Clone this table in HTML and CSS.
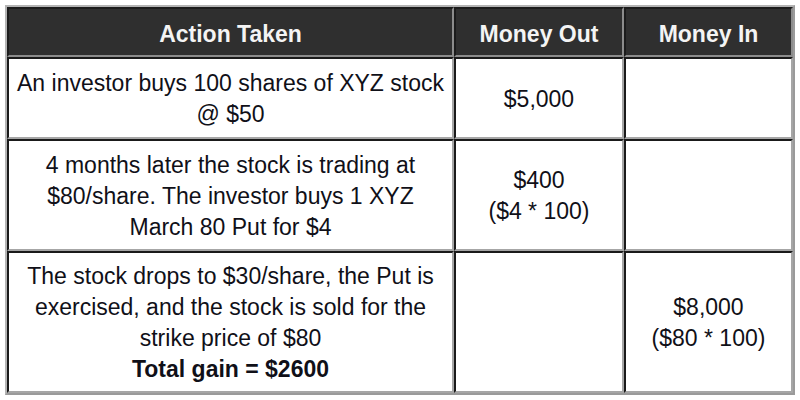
FILE: index.html
```html
<!DOCTYPE html>
<html>
<head>
<meta charset="utf-8">
<link rel="stylesheet" href="styles.css">
</head>
<body>
<table class="trade">
  <colgroup>
    <col class="c1">
    <col class="c2">
    <col class="c3">
  </colgroup>
  <thead>
    <tr class="head">
      <th>Action Taken</th>
      <th>Money Out</th>
      <th>Money In</th>
    </tr>
  </thead>
  <tbody>
    <tr class="r1">
      <td>An investor buys 100 shares of XYZ stock<br>@ $50</td>
      <td>$5,000</td>
      <td></td>
    </tr>
    <tr class="r2">
      <td>4 months later the stock is trading at<br>$80/share. The investor buys 1 XYZ<br>March 80 Put for $4</td>
      <td>$400<br>($4 * 100)</td>
      <td></td>
    </tr>
    <tr class="r3">
      <td>The stock drops to $30/share, the Put is<br>exercised, and the stock is sold for the<br>strike price of $80<br><b>Total gain = $2600</b></td>
      <td></td>
      <td>$8,000<br>($80 * 100)</td>
    </tr>
  </tbody>
</table>
</body>
</html>
```

FILE: styles.css
```css
html, body {
  margin: 0;
  padding: 0;
  background: #ffffff;
}
body {
  padding: 5px;
  font-family: "Liberation Sans", Arial, sans-serif;
}
.trade {
  width: 790px;
  height: 390px;
  table-layout: fixed;
  border-collapse: separate;
  border-spacing: 0;
  border: 2px solid;
  border-color: #b4b4b4 #9a9a9a #9a9a9a #b4b4b4;
}
.c1 { width: 447px; }
.c2 { width: 170px; }
.c3 { width: 169px; }
.trade th,
.trade td {
  text-align: center;
  vertical-align: middle;
  padding: 2px 2px 0;
  border: 2px solid;
  font-size: 23px;
  line-height: 31px;
  color: #101018;
}
.trade th {
  background: #2f2f2f;
  color: #f4f4f4;
  font-weight: bold;
  border-color: #1c1c1c #8c8c8c #8c8c8c #1c1c1c;
  padding-top: 4px;
}
.trade td {
  background: #ffffff;
  border-color: #1a1a1a #a6a6a6 #a6a6a6 #1a1a1a;
}
.head { height: 50px; }
.r1 { height: 82px; }
.r2 { height: 112px; }
.r3 { height: 142px; }
```
